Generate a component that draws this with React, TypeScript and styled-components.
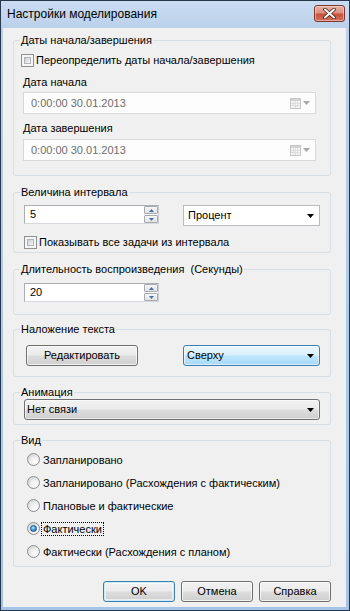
import React from 'react';
import styled, { createGlobalStyle } from 'styled-components';

const GlobalStyle = createGlobalStyle`
  html, body { margin: 0; padding: 0; background: #ffffff; }
  *, *::before, *::after { box-sizing: border-box; }
`;

const Window = styled.div`
  width: 350px;
  height: 611px;
  display: flex;
  flex-direction: column;
  border: 1px solid #27384c;
  background: linear-gradient(#cadcf2 0px, #bad0ea 28px, #a3c4e8 100%);
  font-family: "Liberation Sans", Arial, sans-serif;
  font-size: 11px;
  line-height: 13px;
  color: #000;
  overflow: hidden;
`;

const TitleBar = styled.div`
  flex: none;
  height: 27px;
  display: flex;
  justify-content: space-between;
  padding: 0 4px 0 6px;
`;

const TitleText = styled.div`
  align-self: center;
  font-size: 12px;
  line-height: 15px;
`;

const CloseButton = styled.div`
  margin-top: 4px;
  width: 31px;
  height: 17px;
  border: 1px solid #7a3a30;
  border-radius: 3px;
  background: linear-gradient(#e8b2a6 0%, #dc8f80 45%, #c8503c 55%, #d2725d 100%);
  box-shadow: inset 0 0 0 1px rgba(255, 225, 215, 0.5);
  display: flex;
  align-items: center;
  justify-content: center;
`;

const Client = styled.div`
  flex: 1;
  margin: 0 3px 3px 2px;
  padding: 5px 15px 0 10px;
  background: #f0f0f0;
  display: flex;
  flex-direction: column;
`;

const Group = styled.fieldset<{ $mt: number }>`
  margin: ${p => p.$mt}px 0 0;
  padding: 0;
  border: 1px solid #d5dfe5;
  border-radius: 3px;
  min-width: 0;
`;

const Legend = styled.legend`
  margin-left: 6px;
  padding: 0 1px;
  line-height: 14px;
  white-space: pre;
`;

const GroupBody = styled.div<{ $pt: number; $pb: number }>`
  display: flex;
  flex-direction: column;
  align-items: flex-start;
  padding: ${p => p.$pt}px 0 ${p => p.$pb}px;
`;

const CheckRow = styled.label<{ $ml: number; $mt?: number }>`
  display: flex;
  align-items: center;
  gap: 2px;
  height: 13px;
  margin: ${p => p.$mt ?? 0}px 0 0 ${p => p.$ml}px;
`;

const CheckBox = styled.span`
  flex: none;
  width: 13px;
  height: 13px;
  border: 1px solid #8e8f8f;
  background: #f6f6f6;
  padding: 2px;
  &::after {
    content: '';
    display: block;
    width: 100%;
    height: 100%;
    border: 1px solid #b0b4ba;
    background: linear-gradient(135deg, #c8ccd2 0%, #e6e7e9 60%, #f7f7f7 100%);
  }
`;

const FieldLabel = styled.div<{ $mt: number }>`
  margin: ${p => p.$mt}px 0 0 9px;
  line-height: 14px;
`;

const DateField = styled.div<{ $mt: number }>`
  width: 293px;
  height: 22px;
  margin: ${p => p.$mt}px 0 0 9px;
  border: 1px solid #d9d9d9;
  background: #fdfdfd;
  color: #6d6d6d;
  display: flex;
  align-items: center;
  padding: 0 5px 0 7px;
`;

const DateText = styled.span`
  flex: 1;
`;

const DateIcons = styled.span`
  display: flex;
  align-items: center;
  gap: 2px;
`;

const Row = styled.div<{ $ml: number; $gap: number; $mt?: number }>`
  display: flex;
  align-items: flex-start;
  gap: ${p => p.$gap}px;
  margin: ${p => p.$mt ?? 0}px 0 0 ${p => p.$ml}px;
`;

const Spin = styled.div`
  width: 135px;
  height: 19px;
  display: flex;
  border: 1px solid #abadb3;
  border-right-color: #c9ccd2;
  border-bottom-color: #d5d8de;
  background: #ffffff;
`;

const SpinValue = styled.div`
  flex: 1;
  display: flex;
  align-items: center;
  padding-left: 5px;
`;

const SpinButtons = styled.div`
  width: 14px;
  display: flex;
  flex-direction: column;
  gap: 1px;
`;

const SpinButton = styled.div`
  flex: 1;
  border: 1px solid #a7aab0;
  border-radius: 1px;
  background: linear-gradient(#f6f6f6, #e2e3e6);
  display: flex;
  align-items: center;
  justify-content: center;
`;

type ComboKind = 'plain' | 'hot' | 'button';

const comboBorder: Record<ComboKind, string> = {
  plain: '#b9bcc2',
  hot: '#3c7fb1',
  button: '#707070',
};

const comboBg: Record<ComboKind, string> = {
  plain: '#ffffff',
  hot: 'linear-gradient(#eaf6fd 0%, #d9f0fc 48%, #bee6fd 52%, #a7d9f5 100%)',
  button: 'linear-gradient(#f2f2f2 0%, #ebebeb 48%, #dddddd 52%, #cfcfcf 100%)',
};

const Combo = styled.div<{ $w: number; $kind: ComboKind; $pl: number }>`
  width: ${p => p.$w}px;
  height: 21px;
  display: flex;
  align-items: center;
  justify-content: space-between;
  padding: 0 5px 0 ${p => p.$pl}px;
  border: 1px solid ${p => comboBorder[p.$kind]};
  border-radius: ${p => (p.$kind === 'plain' ? 0 : 3)}px;
  background: ${p => comboBg[p.$kind]};
  box-shadow: ${p => (p.$kind === 'plain' ? 'none' : 'inset 0 0 0 1px rgba(255,255,255,0.55)')};
`;

const PushButton = styled.div<{ $w: number; $default?: boolean }>`
  width: ${p => p.$w}px;
  height: 21px;
  flex: none;
  display: flex;
  align-items: center;
  justify-content: center;
  border: 1px solid ${p => (p.$default ? '#3c7fb1' : '#707070')};
  border-radius: 3px;
  background: linear-gradient(#f2f2f2 0%, #ebebeb 48%, #dddddd 52%, #cfcfcf 100%);
  box-shadow: ${p =>
    p.$default
      ? 'inset 0 0 0 1px #c8ecfc, inset 0 0 0 2px rgba(255,255,255,0.6)'
      : 'inset 0 0 0 1px rgba(255,255,255,0.7)'};
`;

const RadioList = styled.div`
  display: flex;
  flex-direction: column;
  gap: 6px;
  margin-left: 13px;
`;

const RadioRow = styled.label`
  height: 17px;
  display: flex;
  align-items: center;
  gap: 1px;
`;

const Radio = styled.span<{ $checked?: boolean }>`
  flex: none;
  width: 13px;
  height: 13px;
  border-radius: 50%;
  border: 1px solid #8e8f8f;
  background: radial-gradient(circle at 65% 70%, #ffffff 0%, #f2f2f2 35%, #d2d3d5 85%, #c4c6c9 100%);
  display: flex;
  align-items: center;
  justify-content: center;
  &::after {
    content: '';
    display: ${p => (p.$checked ? 'block' : 'none')};
    width: 7px;
    height: 7px;
    border-radius: 50%;
    border: 1px solid #1a4f86;
    background: radial-gradient(circle at 40% 35%, #bfeaff 0%, #45a7e6 45%, #12599c 100%);
  }
`;

const RadioText = styled.span<{ $focused?: boolean }>`
  padding: 0 1px;
  line-height: 12px;
  border: 1px dotted ${p => (p.$focused ? '#000' : 'transparent')};
`;

const Footer = styled.div`
  display: flex;
  justify-content: flex-end;
  gap: 6px;
  margin-top: 14px;
`;

const DownArrow = ({ color = '#000' }: { color?: string }) => (
  <svg width="7" height="4" viewBox="0 0 7 4">
    <path d="M0 0H7L3.5 4Z" fill={color} />
  </svg>
);

const SpinArrow = ({ up }: { up?: boolean }) => (
  <svg width="5" height="3" viewBox="0 0 5 3">
    <path d={up ? 'M0 3H5L2.5 0Z' : 'M0 0H5L2.5 3Z'} fill="#4a6c9e" />
  </svg>
);

const CalendarIcon = () => (
  <svg width="11" height="11" viewBox="0 0 11 11">
    <rect x="0.5" y="0.5" width="10" height="10" fill="#f6f6f6" stroke="#c6c6c6" />
    <rect x="1" y="1" width="9" height="2" fill="#d4d4d4" />
    <path d="M3.5 3V10M5.5 3V10M7.5 3V10M1 5.5H10M1 7.5H10" stroke="#dedede" strokeWidth="1" />
  </svg>
);

const CloseGlyph = () => (
  <svg width="13" height="11" viewBox="0 0 13 11">
    <path d="M2 1.5L11 9.5M11 1.5L2 9.5" stroke="#4a1a12" strokeWidth="3.6" strokeLinecap="round" />
    <path d="M2 1.5L11 9.5M11 1.5L2 9.5" stroke="#ffffff" strokeWidth="2" strokeLinecap="round" />
  </svg>
);

const DateInput = ({ mt }: { mt: number }) => (
  <DateField $mt={mt}>
    <DateText>0:00:00 30.01.2013</DateText>
    <DateIcons>
      <CalendarIcon />
      <DownArrow color="#a8a8a8" />
    </DateIcons>
  </DateField>
);

const SpinBox = ({ value }: { value: string }) => (
  <Spin>
    <SpinValue>{value}</SpinValue>
    <SpinButtons>
      <SpinButton>
        <SpinArrow up />
      </SpinButton>
      <SpinButton>
        <SpinArrow />
      </SpinButton>
    </SpinButtons>
  </Spin>
);

const views = [
  'Запланировано',
  'Запланировано (Расхождения с фактическим)',
  'Плановые и фактические',
  'Фактически',
  'Фактически (Расхождения с планом)',
];

export default function App() {
  return (
    <>
      <GlobalStyle />
      <Window>
        <TitleBar>
          <TitleText>Настройки моделирования</TitleText>
          <CloseButton>
            <CloseGlyph />
          </CloseButton>
        </TitleBar>
        <Client>
          <Group $mt={0}>
            <Legend>Даты начала/завершения</Legend>
            <GroupBody $pt={7} $pb={14}>
              <CheckRow $ml={7}>
                <CheckBox />
                Переопределить даты начала/завершения
              </CheckRow>
              <FieldLabel $mt={8}>Дата начала</FieldLabel>
              <DateInput mt={3} />
              <FieldLabel $mt={7}>Дата завершения</FieldLabel>
              <DateInput mt={4} />
            </GroupBody>
          </Group>

          <Group $mt={9}>
            <Legend>Величина интервала</Legend>
            <GroupBody $pt={6} $pb={3}>
              <Row $ml={10} $gap={24}>
                <SpinBox value="5" />
                <Combo $w={137} $kind="plain" $pl={4}>
                  Процент
                  <DownArrow />
                </Combo>
              </Row>
              <CheckRow $ml={10} $mt={10}>
                <CheckBox />
                Показывать все задачи из интервала
              </CheckRow>
            </GroupBody>
          </Group>

          <Group $mt={9}>
            <Legend>{'Длительность воспроизведения  (Секунды)'}</Legend>
            <GroupBody $pt={7} $pb={12}>
              <Row $ml={10} $gap={0}>
                <SpinBox value="20" />
              </Row>
            </GroupBody>
          </Group>

          <Group $mt={7}>
            <Legend>Наложение текста</Legend>
            <GroupBody $pt={9} $pb={10}>
              <Row $ml={12} $gap={45}>
                <PushButton $w={112}>Редактировать</PushButton>
                <Combo $w={137} $kind="hot" $pl={3}>
                  Сверху
                  <DownArrow />
                </Combo>
              </Row>
            </GroupBody>
          </Group>

          <Group $mt={8}>
            <Legend>Анимация</Legend>
            <GroupBody $pt={0} $pb={4}>
              <Row $ml={10} $gap={0}>
                <Combo $w={296} $kind="button" $pl={2}>
                  Нет связи
                  <DownArrow />
                </Combo>
              </Row>
            </GroupBody>
          </Group>

          <Group $mt={8}>
            <Legend>Вид</Legend>
            <GroupBody $pt={4} $pb={6}>
              <RadioList>
                {views.map((v, i) => (
                  <RadioRow key={v}>
                    <Radio $checked={i === 3} />
                    <RadioText $focused={i === 3}>{v}</RadioText>
                  </RadioRow>
                ))}
              </RadioList>
            </GroupBody>
          </Group>

          <Footer>
            <PushButton $w={72} $default>
              OK
            </PushButton>
            <PushButton $w={72}>Отмена</PushButton>
            <PushButton $w={72}>Справка</PushButton>
          </Footer>
        </Client>
      </Window>
    </>
  );
}
